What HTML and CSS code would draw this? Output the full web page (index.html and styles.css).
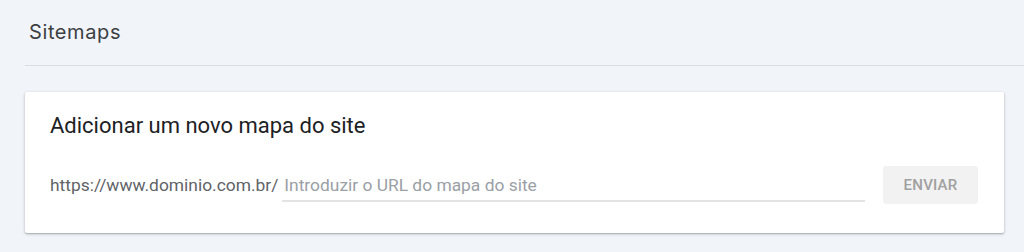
FILE: index.html
```html
<!DOCTYPE html>
<html lang="pt-BR">
<head>
<meta charset="utf-8">
<title>Sitemaps</title>
<link rel="stylesheet" href="styles.css">
</head>
<body>
<div class="page">
  <header class="page-header">
    <h1 class="page-title">Sitemaps</h1>
  </header>
  <section class="card">
    <h2 class="card-title">Adicionar um novo mapa do site</h2>
    <div class="form-row">
      <span class="prefix">https://www.dominio.com.br/</span>
      <input class="url-input" type="text" placeholder="Introduzir o URL do mapa do site">
      <button class="submit" type="button" disabled>ENVIAR</button>
    </div>
  </section>
</div>
</body>
</html>
```
FILE: styles.css
```css
* { box-sizing: border-box; }
html, body {
  margin: 0;
  padding: 0;
  background: #f1f4f9;
  font-family: Roboto, "Liberation Sans", sans-serif;
}
.page {
  padding-left: 25px;
  height: 252px;
  overflow: hidden;
}
.page-header {
  border-bottom: 1px solid #dadce0;
  height: 66px;
  padding: 19px 0 0 4px;
}
.page-title {
  margin: 0;
  font-family: Inter, Roboto, sans-serif;
  font-size: 20px;
  font-weight: 400;
  letter-spacing: 0.6px;
  color: #3c4043;
  line-height: 26px;
}
.card {
  margin-top: 26px;
  width: 979px;
  height: 141px;
  background: #fff;
  border-radius: 2px;
  box-shadow: 0 1px 3px rgba(60, 64, 67, 0.35), 0 1px 1px rgba(60, 64, 67, 0.15);
  padding: 21px 26px 0 25px;
}
.card-title {
  margin: 0;
  font-size: 22px;
  font-weight: 400;
  color: #202124;
  line-height: 26px;
}
.form-row {
  display: flex;
  align-items: center;
  height: 38px;
  margin-top: 27px;
}
.prefix {
  font-size: 17.4px;
  color: #5f6368;
  margin-right: 4px;
  white-space: nowrap;
}
.url-input {
  flex: 1;
  min-width: 0;
  height: 34px;
  border: 0;
  border-bottom: 2px solid #e3e3e3;
  outline: none;
  font-family: inherit;
  font-size: 17.4px;
  color: #202124;
  padding: 7px 0 5px 2px;
  background: transparent;
}
.url-input::placeholder { color: #9aa0a6; }
.submit {
  flex: none;
  margin-left: 18px;
  width: 95px;
  height: 38px;
  border: 0;
  border-radius: 3px;
  background: #f2f2f2;
  color: #a0a0a0;
  font-family: inherit;
  font-weight: 500;
  font-size: 15px;
  letter-spacing: 0.2px;
}
```
